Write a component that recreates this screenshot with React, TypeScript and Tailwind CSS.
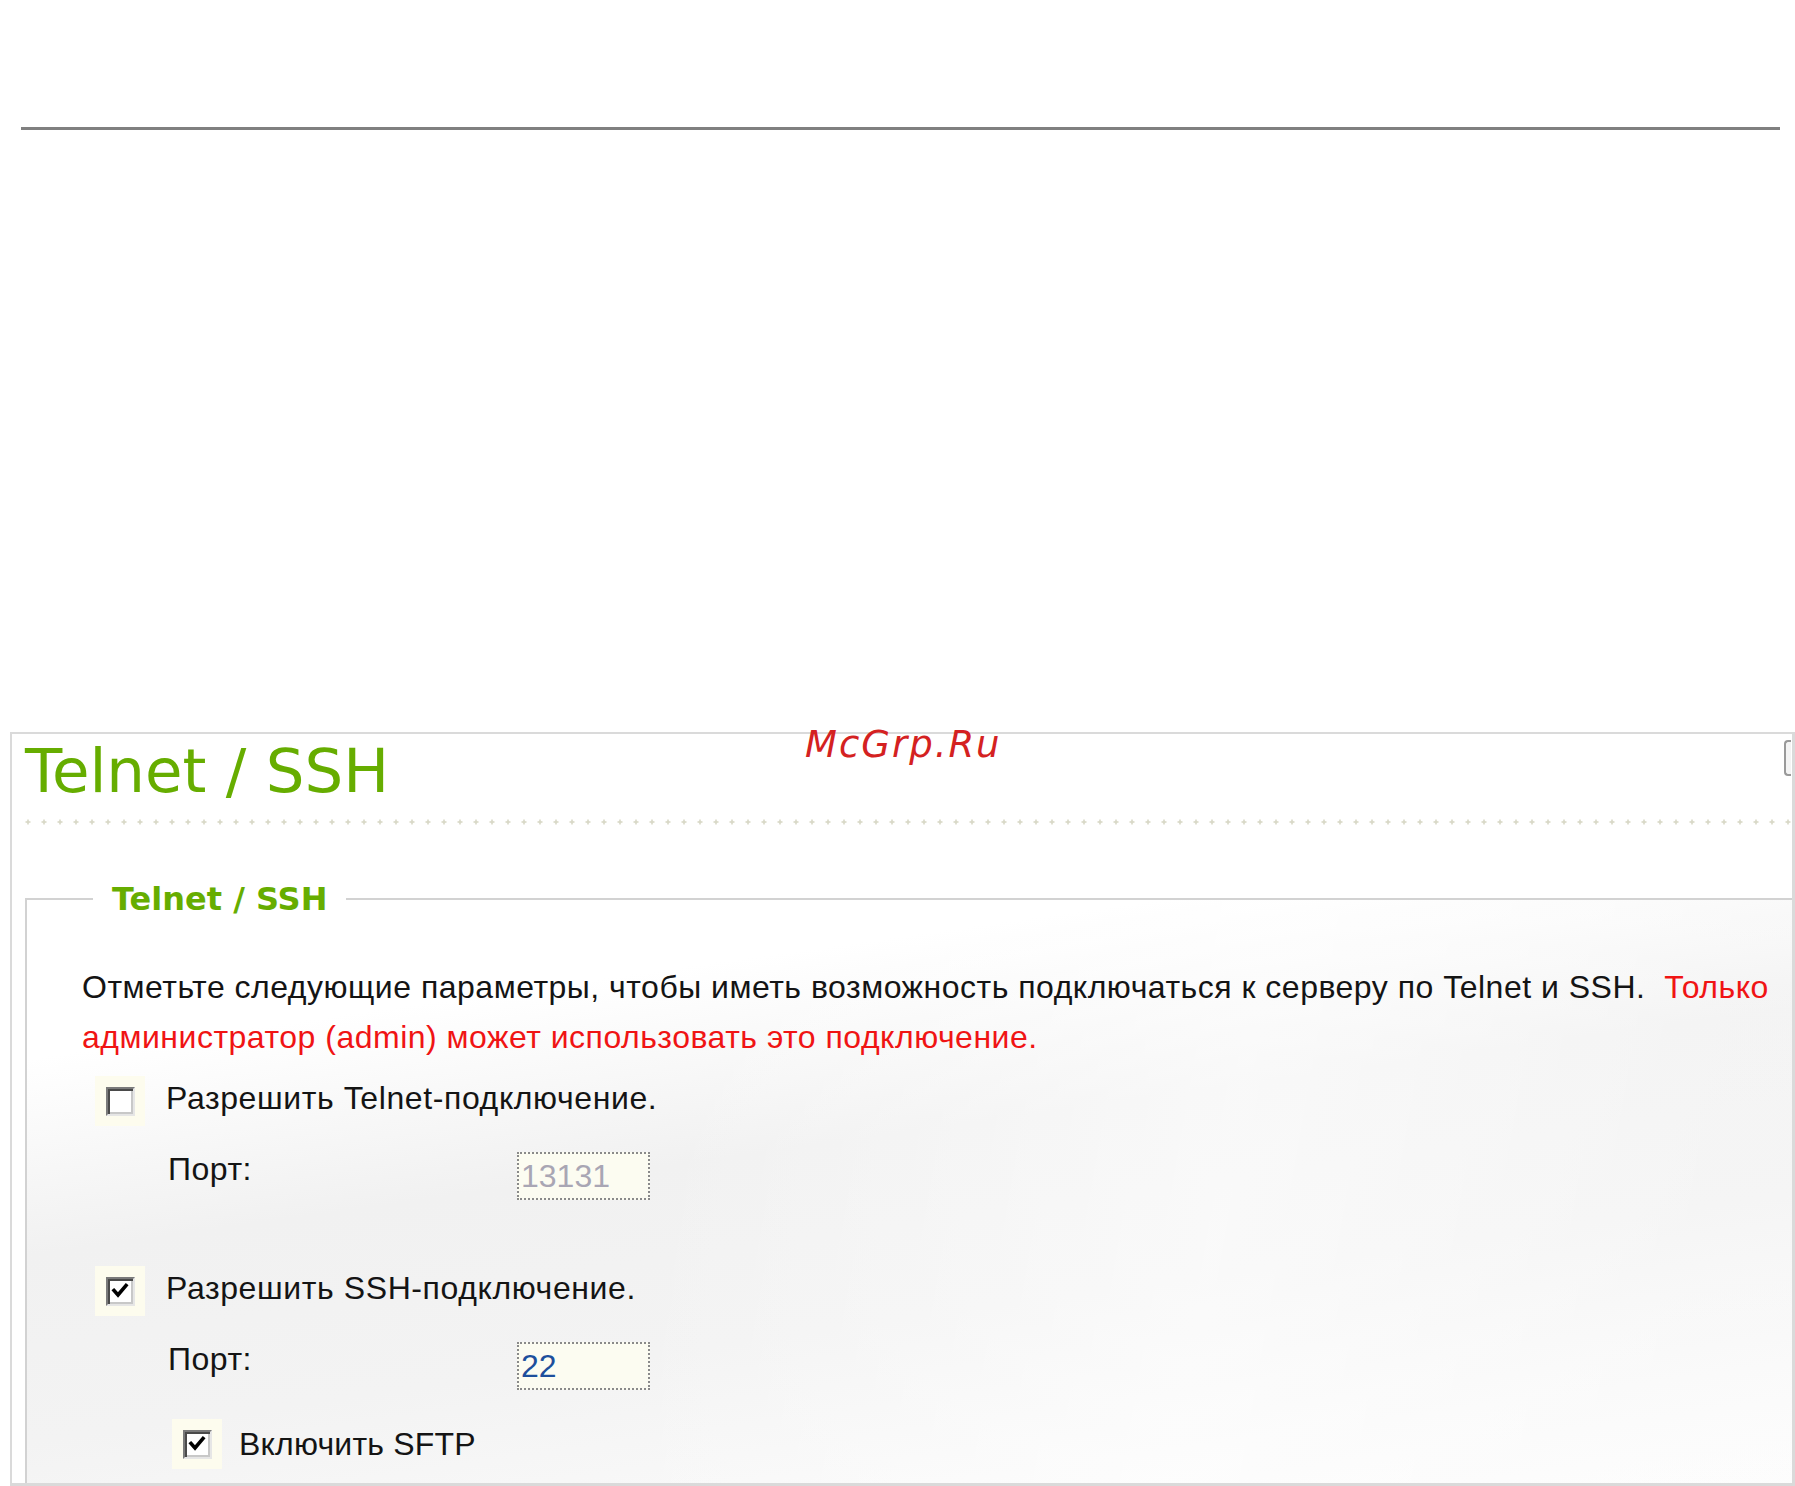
import React from "react";

function CheckBox({ checked }: { checked: boolean }) {
  return (
    <div className="w-[50px] h-[50px] bg-[#fdfcee] flex items-center justify-center shrink-0">
      <div className="w-[29px] h-[29px] bg-white border-t-2 border-l-2 border-b-2 border-r-2 border-t-[#7a7a7a] border-l-[#7a7a7a] border-b-[#e6e6e6] border-r-[#e6e6e6] shadow-[inset_2px_2px_0_#4a4a4a,inset_-2px_-2px_0_#c8c8c8] flex items-center justify-center">
        {checked && (
          <svg width="18" height="18" viewBox="0 0 18 18">
            <polyline points="3,8.5 7,13 15,3.5" fill="none" stroke="#000" strokeWidth="3.6" strokeLinecap="square" />
          </svg>
        )}
      </div>
    </div>
  );
}

function PortRow({ value, disabled }: { value: string; disabled: boolean }) {
  return (
    <div className="flex items-start pl-[141px] mt-[26px]">
      <div className="w-[349px] leading-[34px] text-[32px] tracking-[0.5px] text-[#141414]">Порт:</div>
      <div className="w-[133px] h-[48px] border-2 border-dotted border-[#8a8a8a] bg-[#fcfcf1] flex items-center pl-[2px]">
        <span
          className={
            disabled
              ? "text-[32px] leading-none text-[#a9a6b4] font-['Liberation_Sans',sans-serif]"
              : "text-[32px] leading-none text-[#1d4f9c] font-['Liberation_Sans',sans-serif]"
          }
        >
          {value}
        </span>
      </div>
    </div>
  );
}

export default function App() {
  return (
    <div className="w-[1795px] h-[1486px] overflow-hidden bg-white relative font-['Liberation_Sans',sans-serif]">
      <div className="pt-[127px] pl-[21px]">
        <div className="h-[3px] w-[1759px] bg-[#808080]" />
      </div>

      <div className="mt-[602px] ml-[10px] w-[1785px] h-[754px] border-l-2 border-t-2 border-r-[3px] border-b-[3px] border-[#dadada] overflow-hidden relative bg-white">
        <div className="absolute right-[1px] top-[6px] w-[7px] h-[36px] border-l-2 border-t-2 border-b-2 border-[#9a9a9a] rounded-l-[4px] bg-[#f4f4f4]" />

        <div className="pl-[13px] pt-[6px]">
          <div className="text-[61px] leading-none text-[#66ad00] font-['DejaVu_Sans',sans-serif]">
            Telnet / SSH
          </div>
        </div>

        <svg className="block mt-[18px] ml-[13px]" width="1780" height="6">
          <defs>
            <pattern id="plus" x="0" y="0" width="16" height="6" patternUnits="userSpaceOnUse">
              <rect x="0.5" y="2.2" width="5" height="1.6" fill="#d8d8c6" />
              <rect x="2.2" y="0.5" width="1.6" height="5" fill="#d8d8c6" />
            </pattern>
          </defs>
          <rect x="0" y="0" width="1780" height="6" fill="url(#plus)" />
        </svg>

        <fieldset className="mt-[58px] ml-[13px] w-[1800px] h-[700px] border-l-2 border-t-2 border-[#d2d2d2] bg-[linear-gradient(100deg,rgba(255,255,255,0)_35%,rgba(255,255,255,0.55)_65%,rgba(255,255,255,0.2)_90%),linear-gradient(172deg,#ffffff_0%,#ffffff_17%,#f1f1f1_38%,#f3f3f3_58%,#f9f9f9_76%,#ffffff_100%)]">
          <legend className="ml-[66px] px-[19px] text-[32px] leading-none font-bold text-[#66ad00] font-['DejaVu_Sans',sans-serif]">
            Telnet / SSH
          </legend>

          <div className="pl-[55px] pt-[47px] text-[32px] tracking-[0.5px] leading-[50px] text-[#141414]">
            <span>Отметьте следующие параметры, чтобы иметь возможность подключаться к серверу по Telnet и SSH.</span>
            <span className="text-[#f01414]">&nbsp;&nbsp;Только</span>
            <br />
            <span className="text-[#f01414]">администратор (admin) может использовать это подключение.</span>
          </div>

          <div className="flex items-center pl-[68px] mt-[14px]">
            <CheckBox checked={false} />
            <div className="ml-[21px] text-[32px] tracking-[0.6px] leading-[34px] text-[#141414] -mt-[6px]">Разрешить Telnet-подключение.</div>
          </div>

          <PortRow value="13131" disabled={true} />

          <div className="flex items-center pl-[68px] mt-[66px]">
            <CheckBox checked={true} />
            <div className="ml-[21px] text-[32px] tracking-[0.6px] leading-[34px] text-[#141414] -mt-[6px]">Разрешить SSH-подключение.</div>
          </div>

          <PortRow value="22" disabled={false} />

          <div className="flex items-center pl-[145px] mt-[29px]">
            <CheckBox checked={true} />
            <div className="ml-[17px] text-[32px] tracking-[0.2px] leading-[34px] text-[#141414]">Включить SFTP</div>
          </div>
        </fieldset>
      </div>

      <div className="absolute left-[805px] top-[726px] text-[37px] leading-none italic text-[#d42121] font-['DejaVu_Sans',sans-serif] tracking-[2px]">
        McGrp.Ru
      </div>
    </div>
  );
}
